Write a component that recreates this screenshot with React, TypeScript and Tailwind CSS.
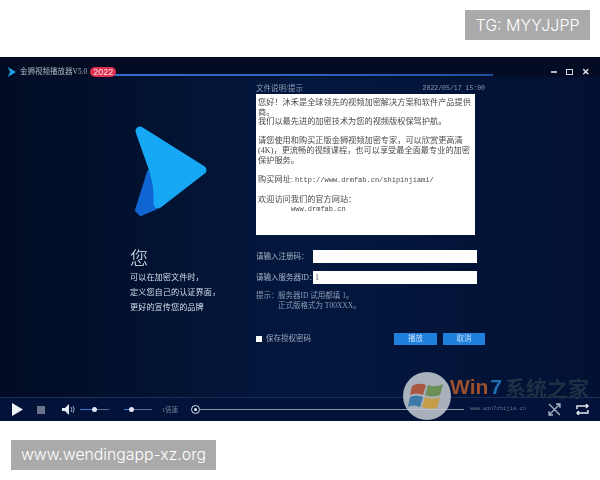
import React from "react";

const serif = "font-['Liberation_Serif','Noto_Sans_CJK_SC',serif]";
const mono = "font-['Liberation_Mono',monospace]";

const Logo = () => (
  <svg width="76" height="94" viewBox="0 0 76 94" className="block">
    <path d="M15 48 L3 86 L7 90 L21 84 Z" fill="#0f66d2" stroke="#0f66d2" strokeWidth="4" strokeLinejoin="round" />
    <path d="M6 7 L68 46 L24 80 Q25 62 19 44 Z" fill="#16a8f4" stroke="#16a8f4" strokeWidth="9" strokeLinejoin="round" />
  </svg>
);

const WinFlag = () => (
  <svg width="48" height="48" viewBox="0 0 48 48" className="block">
    <circle cx="24" cy="24" r="24" fill="#c6ccd4" fillOpacity="0.85" />
    <path d="M9 14 Q15 10 23 13 L20 23 Q13 20 7 23 Z" fill="#a9583f" />
    <path d="M25 13 Q32 16 40 12 L37 23 Q29 26 22 23 Z" fill="#6c8f58" />
    <path d="M7 25 Q13 22 20 25 L17 35 Q10 32 5 35 Z" fill="#3d7aa8" />
    <path d="M22 25 Q29 28 37 25 L34 36 Q26 38 19 35 Z" fill="#c69c48" />
  </svg>
);

const Slider = ({ width, knob, active }: { width: string; knob: string; active: string }) => (
  <div className={`relative h-[5px] ${width}`}>
    <div className="absolute left-0 right-0 top-[2px] h-px bg-[#5d6f93]" />
    <div className={`absolute left-0 top-[2px] h-px bg-[#3f79d8] ${active}`} />
    <div className={`absolute top-0 size-[5px] rounded-full bg-[#dfe6f2] ${knob}`} />
  </div>
);

const ControlBar = () => (
  <div className="flex h-[24px] shrink-0 items-center border-t border-[#1a2f58] bg-[#031238] pl-[12px] pr-[11px]">
    <svg width="11" height="13" viewBox="0 0 11 13"><path d="M0 0 L11 6.5 L0 13 Z" fill="#f2f5fa" /></svg>
    <div className="ml-[14px] size-[8px] bg-[#6a7488]" />
    <svg width="14" height="11" viewBox="0 0 14 11" className="ml-[17px]">
      <path d="M0 4 H3 L7 0 V11 L3 7 H0 Z" fill="#e8edf5" />
      <path d="M9 3 Q11 5.500 9 8 M11 2 Q13.500 5.500 11 9" stroke="#aab6cc" fill="none" strokeWidth="0.9" />
    </svg>
    <Slider width="w-[29px] ml-[4px]" knob="left-[12px]" active="w-[14px]" />
    <Slider width="w-[28px] ml-[15px]" knob="left-[5px]" active="w-[7px]" />
    <span className={`${serif} ml-[10px] w-[18px] text-[6.500px] whitespace-nowrap text-[#76839c]`}>1倍速</span>
    <div className="ml-[11px] flex size-[9px] shrink-0 items-center justify-center rounded-full border border-[#dbe2ee]">
      <div className="size-[3px] rounded-full bg-[#e6ebf4]" />
    </div>
    <div className="h-px w-[266px] bg-[#8b97ad]" />
    <div className="w-[84px]" />
    <svg width="13" height="13" viewBox="0 0 13 13" fill="none" stroke="#a9b2c2" strokeWidth="1.300">
      <path d="M1 1 L12 12 M12 1 L1 12 M8 1 H12 V5 M1 8 V12 H5" />
    </svg>
    <svg width="13" height="11" viewBox="0 0 13 11" className="ml-[15px]" fill="none" stroke="#e2e7f0" strokeWidth="1.500">
      <path d="M1 5 V2 H12 M12 6 V9 H1 M10 0 L12 2 L10 4 M3 7 L1 9 L3 11" />
    </svg>
  </div>
);

const TitleBar = () => (
  <div className="relative flex h-[20px] shrink-0 items-center bg-[#030c22] pt-[10px] pl-[8px] pr-[10px]">
    <svg width="8" height="10" viewBox="0 0 8 10"><path d="M0 0 L8 5 L0 10 L2 5 Z" fill="#1f9fe6" /></svg>
    <span className={`${serif} ml-[4px] text-[7.500px] text-[#aeb7c4]`}>金狮视频播放器V5.0</span>
    <div className="absolute bottom-[1px] left-[112px] h-[2px] w-[381px] bg-gradient-to-r from-[#2f6fd0] via-[#2a66c4] to-[#1d4f9f]" />
    <span className="relative ml-[3px] h-[10px] rounded-full bg-[#df2f50] px-[3px] font-['Liberation_Sans',sans-serif] text-[9px] leading-[10px] text-[#f4e3e6]">2022</span>
    <div className="ml-auto flex items-center gap-[9px]">
      <div className="h-[2px] w-[6px] bg-[#aeb6c4]" />
      <div className="h-[6px] w-[7px] border border-[#ccd2dc]" />
      <span className="font-['Liberation_Sans',sans-serif] text-[9px] leading-none font-bold text-[#eef1f6]">✕</span>
    </div>
  </div>
);

const Field = ({ label, value }: { label: string; value?: string }) => (
  <div className="flex h-[13px] items-center">
    <span className={`${serif} w-[57px] text-[7.500px] whitespace-nowrap text-[#a9b5c8]`}>{label}</span>
    <div className="flex h-[13px] w-[164px] items-center bg-white pl-[2px] font-['Liberation_Serif',serif] text-[8px] text-[#555]">{value}</div>
  </div>
);

export default function App() {
  return (
    <div className="flex h-[480px] w-[600px] flex-col overflow-hidden bg-white">
      <div className="flex h-[57px] shrink-0 justify-end pt-[10px] pr-[10px]">
        <div className="flex h-[30px] w-[125px] items-center justify-center bg-[#aaaaaa] font-['Inter',sans-serif] text-[16px] font-light text-white">TG: MYYJJPP</div>
      </div>

      <div className="relative flex h-[364px] shrink-0 flex-col bg-[#021033] blur-[0.3px]">
        <TitleBar />
        <div className="flex flex-1 bg-gradient-to-r from-[#020c24] via-[#03183f] to-[#021033]">
          <div className="w-[256px] shrink-0 pl-[130px]">
            <div className="mt-[47px] ml-[4px]"><Logo /></div>
            <div className="mt-[28px] font-['Noto_Sans_CJK_SC',sans-serif] text-[18px] leading-[22px] font-light text-[#e8edf5]">您</div>
            <div className="mt-[1px] font-['Noto_Sans_CJK_SC',sans-serif] text-[8.200px] leading-[15px] whitespace-nowrap text-[#d6deea]">
              <div>可以在加密文件时，</div>
              <div>定义您自己的认证界面，</div>
              <div>更好的宣传您的品牌</div>
            </div>
          </div>

          <div className="w-[230px] shrink-0 pt-[6px]">
            <div className={`${serif} flex h-[11px] w-[229px] items-center justify-between text-[7.500px] text-[#8d9ab3]`}>
              <span>文件说明/提示</span>
              <span className={`${mono} text-[6.500px]`}>2022/05/17 15:00</span>
            </div>
            <div className={`${serif} h-[141px] w-[219px] bg-white px-[2px] pt-[4px] text-[8.200px] leading-[9.600px] text-[#4a4a4a]`}>
              <p>您好！沐禾是全球领先的视频加密解决方案和软件产品提供商。</p>
              <p>我们以最先进的加密技术为您的视频版权保驾护航。</p>
              <p className="mt-[9.600px]">请您使用和购买正版金狮视频加密专家，可以欣赏更高清(4K)，更流畅的视频课程，也可以享受最全面最专业的加密保护服务。</p>
              <p className="mt-[9.600px]">购买网址: <span className={`${mono} text-[7px]`}>http://www.drmfab.cn/shipinjiami/</span></p>
              <p className="mt-[9.600px]">欢迎访问我们的官方网站：</p>
              <p className={`${mono} pl-[33px] text-[7px]`}>www.drmfab.cn</p>
            </div>

            <div className="mt-[15px] flex flex-col gap-[8px]">
              <Field label="请输入注册码：" />
              <Field label="请输入服务器ID：" value="1" />
            </div>

            <div className={`${serif} mt-[7px] flex text-[7.500px] leading-[9.500px] text-[#8d9ab3]`}>
              <span className="w-[22px] whitespace-nowrap">提示：</span>
              <div>
                <div>服务器ID 试用都填 1。</div>
                <div>正式版格式为 T00XXX。</div>
              </div>
            </div>

            <div className="mt-[23px] flex h-[12px] w-[229px] items-center">
              <div className="size-[6px] bg-white" />
              <span className={`${serif} ml-[4px] text-[7.500px] text-[#9aa6bb]`}>保存授权密码</span>
              <div className={`${serif} ml-auto flex gap-[6px] text-[7.500px] text-[#c9def5]`}>
                <div className="flex h-[12px] w-[43px] items-center justify-center bg-[#1e7fdc]">播放</div>
                <div className="flex h-[12px] w-[42px] items-center justify-center bg-[#1e7fdc]">取消</div>
              </div>
            </div>
          </div>
        </div>
        <ControlBar />

        <div className="absolute left-[403px] top-[315px]"><WinFlag /></div>
        <div className="absolute left-[450px] top-[317px] flex items-center text-[21px] leading-[26px] font-bold">
          <span className="font-['Liberation_Sans',sans-serif] text-[#9c4f2c]">Win</span>
          <span className="ml-[2px] font-['Liberation_Sans',sans-serif] text-[#1f6fb0]">7</span>
          <span className="ml-[3px] font-['Noto_Sans_CJK_SC',sans-serif] text-[21px] text-[#1d3044]">系统之家</span>
        </div>
        <div className={`${mono} absolute left-[470px] top-[348px] text-[5.500px] leading-[8px] text-[#67728a]`}>www.win7zhijia.cn</div>
      </div>

      <div className="pt-[19px] pl-[11px]">
        <div className="flex h-[30px] w-[205px] items-center justify-center bg-[#aaaaaa] font-['Inter',sans-serif] text-[15.800px] font-light text-white">www.wendingapp-xz.org</div>
      </div>
    </div>
  );
}
